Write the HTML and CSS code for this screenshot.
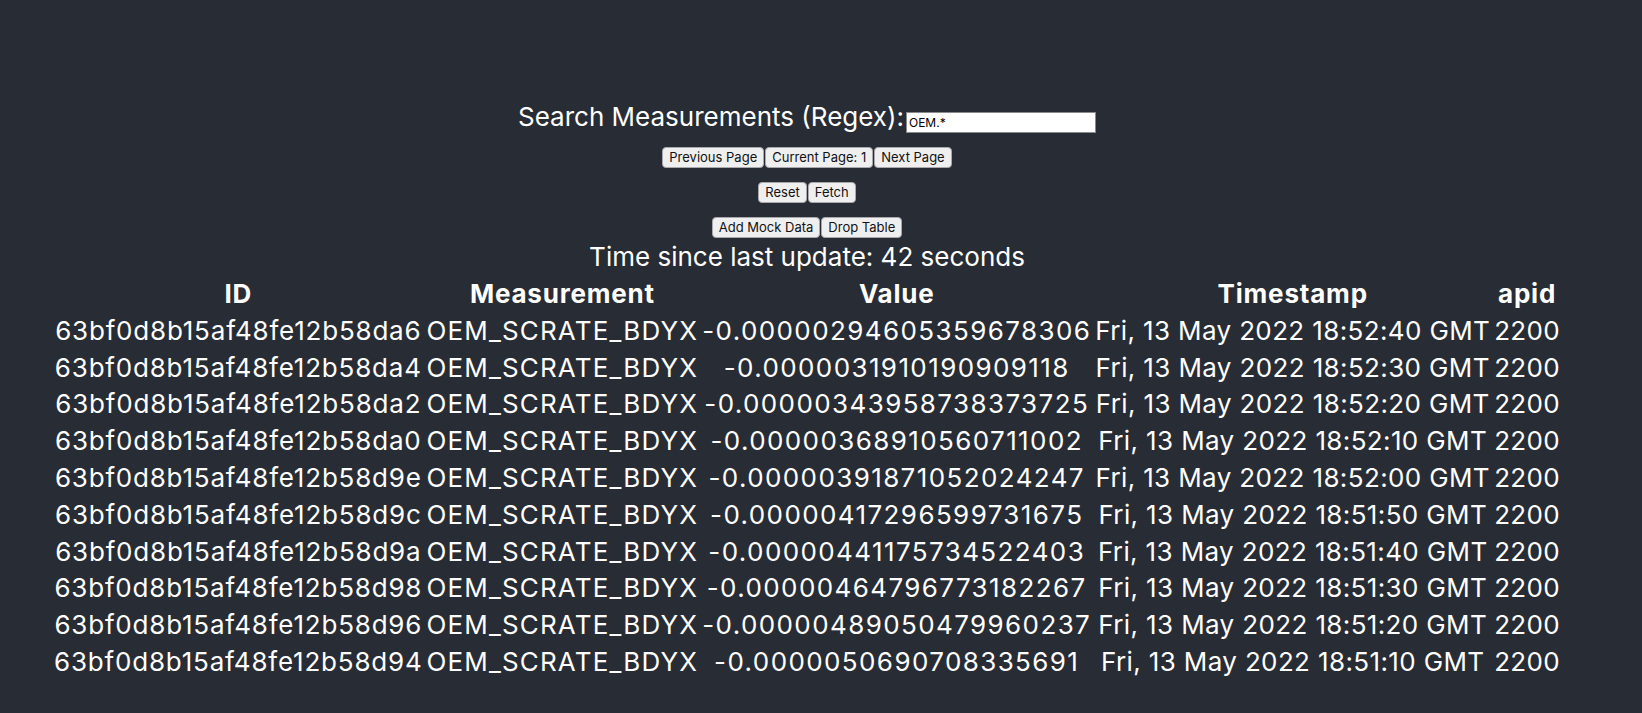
FILE: index.html
```html
<!DOCTYPE html>
<html lang="en">
<head>
<meta charset="utf-8">
<title>Measurements</title>
<link rel="stylesheet" href="styles.css">
</head>
<body>
<div class="app">
  <div class="search">
    <label class="search-label" for="q">Search Measurements (Regex):</label><input id="q" class="search-input" type="text" value="OEM.*">
  </div>
  <div class="btn-row"><button class="btn">Previous Page</button><button class="btn">Current Page: 1</button><button class="btn">Next Page</button></div>
  <div class="btn-row"><button class="btn">Reset</button><button class="btn">Fetch</button></div>
  <div class="btn-row"><button class="btn">Add Mock Data</button><button class="btn">Drop Table</button></div>
  <div class="status">Time since last update: 42 seconds</div>
  <table class="data">
    <thead>
      <tr><th>ID</th><th>Measurement</th><th>Value</th><th>Timestamp</th><th>apid</th></tr>
    </thead>
    <tbody>
      <tr><td>63bf0d8b15af48fe12b58da6</td><td>OEM_SCRATE_BDYX</td><td>-0.00000294605359678306</td><td>Fri, 13 May 2022 18:52:40 GMT</td><td>2200</td></tr>
      <tr><td>63bf0d8b15af48fe12b58da4</td><td>OEM_SCRATE_BDYX</td><td>-0.0000031910190909118</td><td>Fri, 13 May 2022 18:52:30 GMT</td><td>2200</td></tr>
      <tr><td>63bf0d8b15af48fe12b58da2</td><td>OEM_SCRATE_BDYX</td><td>-0.00000343958738373725</td><td>Fri, 13 May 2022 18:52:20 GMT</td><td>2200</td></tr>
      <tr><td>63bf0d8b15af48fe12b58da0</td><td>OEM_SCRATE_BDYX</td><td>-0.00000368910560711002</td><td>Fri, 13 May 2022 18:52:10 GMT</td><td>2200</td></tr>
      <tr><td>63bf0d8b15af48fe12b58d9e</td><td>OEM_SCRATE_BDYX</td><td>-0.00000391871052024247</td><td>Fri, 13 May 2022 18:52:00 GMT</td><td>2200</td></tr>
      <tr><td>63bf0d8b15af48fe12b58d9c</td><td>OEM_SCRATE_BDYX</td><td>-0.00000417296599731675</td><td>Fri, 13 May 2022 18:51:50 GMT</td><td>2200</td></tr>
      <tr><td>63bf0d8b15af48fe12b58d9a</td><td>OEM_SCRATE_BDYX</td><td>-0.00000441175734522403</td><td>Fri, 13 May 2022 18:51:40 GMT</td><td>2200</td></tr>
      <tr><td>63bf0d8b15af48fe12b58d98</td><td>OEM_SCRATE_BDYX</td><td>-0.00000464796773182267</td><td>Fri, 13 May 2022 18:51:30 GMT</td><td>2200</td></tr>
      <tr><td>63bf0d8b15af48fe12b58d96</td><td>OEM_SCRATE_BDYX</td><td>-0.00000489050479960237</td><td>Fri, 13 May 2022 18:51:20 GMT</td><td>2200</td></tr>
      <tr><td>63bf0d8b15af48fe12b58d94</td><td>OEM_SCRATE_BDYX</td><td>-0.0000050690708335691</td><td>Fri, 13 May 2022 18:51:10 GMT</td><td>2200</td></tr>
    </tbody>
  </table>
</div>
</body>
</html>
```
FILE: styles.css
```css
html, body {
  margin: 0;
  padding: 0;
  background: #282c34;
}
.app {
  min-height: 100vh;
  box-sizing: border-box;
  display: flex;
  flex-direction: column;
  align-items: center;
  padding: 102px 28px 0 0;
  color: #ffffff;
  font-family: Inter, "Liberation Sans", sans-serif;
  font-size: 26px;
  text-align: center;
}
.search {
  display: flex;
  align-items: center;
  height: 30px;
  line-height: 30px;
  margin-bottom: 0.5px;
}
.search-input {
  width: 190px;
  height: 21px;
  box-sizing: border-box;
  margin: 10px 0 0 2px;
  padding: 1px 2px;
  border: 1px solid #8a8a8a;
  background: #ffffff;
  color: #000000;
  font-family: Inter, "Liberation Sans", sans-serif;
  font-size: 12px;
  outline: none;
}
.btn-row {
  display: flex;
  gap: 1px;
  margin-top: 14px;
}
.btn {
  height: 21px;
  box-sizing: border-box;
  padding: 0 6px;
  margin: 0;
  border: 1px solid #a9a9ad;
  border-radius: 4px;
  background: #efeff0;
  color: #111111;
  font-family: Inter, "Liberation Sans", sans-serif;
  font-size: 13px;
  line-height: 19px;
}
.status {
  margin-top: 4.5px;
  line-height: 30px;
}
.data {
  margin-top: 3px;
  border-spacing: 2px;
  font-size: 26px;
  letter-spacing: 0.8px;
}
.data th, .data td {
  padding: 1px;
  line-height: 32.8px;
  white-space: nowrap;
}
.data th {
  font-weight: 700;
}
.data td:nth-child(1) {
  letter-spacing: 0.8px;
}
.data td:nth-child(2) {
  letter-spacing: 1.15px;
}
.data td:nth-child(3) {
  letter-spacing: 1.4px;
}
.data td:nth-child(4) {
  letter-spacing: 0.37px;
}
.data td:nth-child(5) {
  letter-spacing: 0.3px;
}
```
